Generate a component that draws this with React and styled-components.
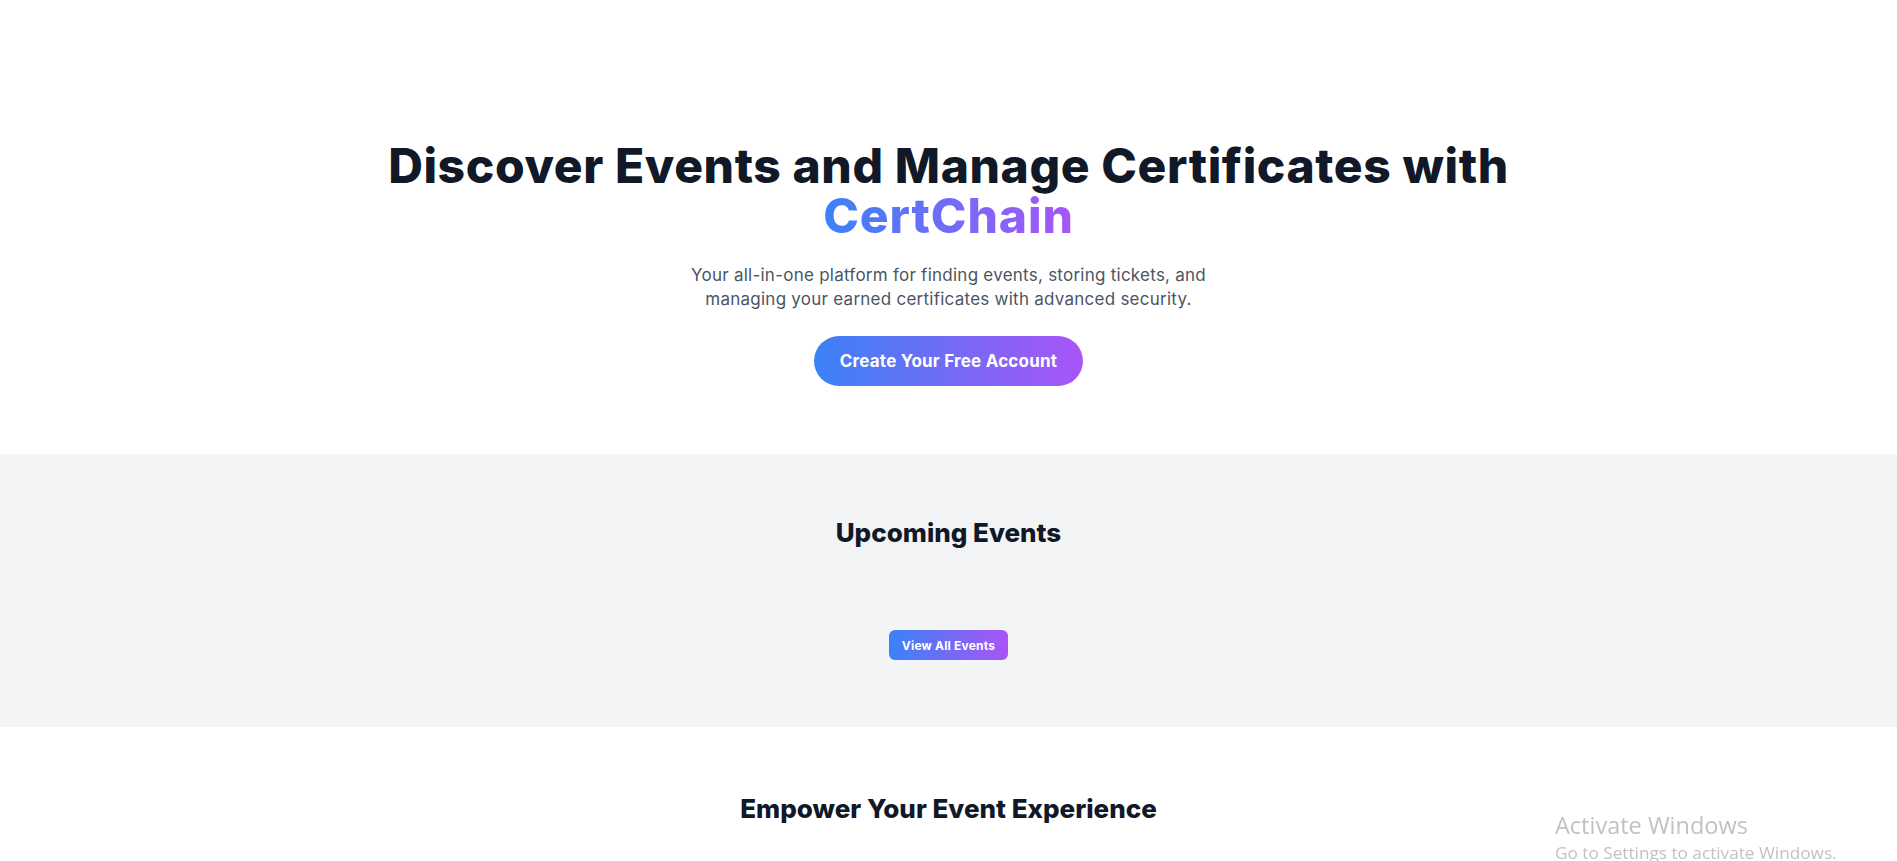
import React from "react";
import styled, { createGlobalStyle } from "styled-components";

const GlobalStyle = createGlobalStyle`
  * { box-sizing: border-box; }
  body {
    margin: 0;
    background: #ffffff;
    font-family: "Inter", "Open Sans", sans-serif;
    color: #111827;
  }
`;

const Page = styled.main`
  display: flex;
  flex-direction: column;
`;

const Hero = styled.section`
  display: flex;
  flex-direction: column;
  align-items: center;
  padding: 141px 24px 68px;
  text-align: center;
`;

const Title = styled.h1`
  margin: 0;
  font-size: 48px;
  line-height: 50px;
  font-weight: 800;
  letter-spacing: 0.6px;
  color: #111827;
`;

const Brand = styled.span`
  display: block;
  width: fit-content;
  margin: 0 auto;
  letter-spacing: 0.9px;
  background: linear-gradient(90deg, #3b82f6, #a855f7);
  -webkit-background-clip: text;
  background-clip: text;
  color: transparent;
`;

const Lead = styled.p`
  margin: 22px 0 0;
  max-width: 560px;
  font-size: 17px;
  line-height: 24px;
  letter-spacing: 0.25px;
  color: #4b5563;
`;

const GradientButton = styled.button`
  border: none;
  cursor: pointer;
  color: #ffffff;
  font-family: inherit;
  font-weight: 700;
  letter-spacing: 0.2px;
  background: linear-gradient(90deg, #3b82f6, #a855f7);
  border-radius: ${(p) => (p.$pill ? "999px" : "6px")};
  font-size: ${(p) => (p.$pill ? "17px" : "12px")};
  height: ${(p) => (p.$pill ? "50px" : "30px")};
  padding: ${(p) => (p.$pill ? "0 26px" : "0 13px")};
  margin-top: ${(p) => p.$top}px;
`;

const Band = styled.section`
  display: flex;
  flex-direction: column;
  align-items: center;
  background: ${(p) => (p.$muted ? "#f3f4f6" : "#ffffff")};
  padding: ${(p) => p.$pad};
`;

const SectionTitle = styled.h2`
  margin: 0;
  font-size: 26px;
  line-height: 36px;
  font-weight: 800;
  color: #111827;
`;

const Watermark = styled.div`
  position: fixed;
  left: 1555px;
  bottom: -4px;
  font-family: "Open Sans", "Noto Sans", sans-serif;
  color: #c2c2c2;
  pointer-events: none;
`;

const WatermarkTitle = styled.div`
  font-size: 23.5px;
  line-height: 31px;
`;

const WatermarkText = styled.div`
  font-size: 17.2px;
  line-height: 24px;
`;

export default function App() {
  return (
    <>
      <GlobalStyle />
      <Page>
        <Hero>
          <Title>
            Discover Events and Manage Certificates with
            <Brand>CertChain</Brand>
          </Title>
          <Lead>
            Your all-in-one platform for finding events, storing tickets, and
            managing your earned certificates with advanced security.
          </Lead>
          <GradientButton $pill $top={25}>
            Create Your Free Account
          </GradientButton>
        </Hero>

        <Band $muted $pad="61px 24px 67px">
          <SectionTitle>Upcoming Events</SectionTitle>
          <GradientButton $top={79}>View All Events</GradientButton>
        </Band>

        <Band $pad="64px 24px 120px">
          <SectionTitle>Empower Your Event Experience</SectionTitle>
        </Band>
      </Page>
      <Watermark>
        <WatermarkTitle>Activate Windows</WatermarkTitle>
        <WatermarkText>Go to Settings to activate Windows.</WatermarkText>
      </Watermark>
    </>
  );
}
